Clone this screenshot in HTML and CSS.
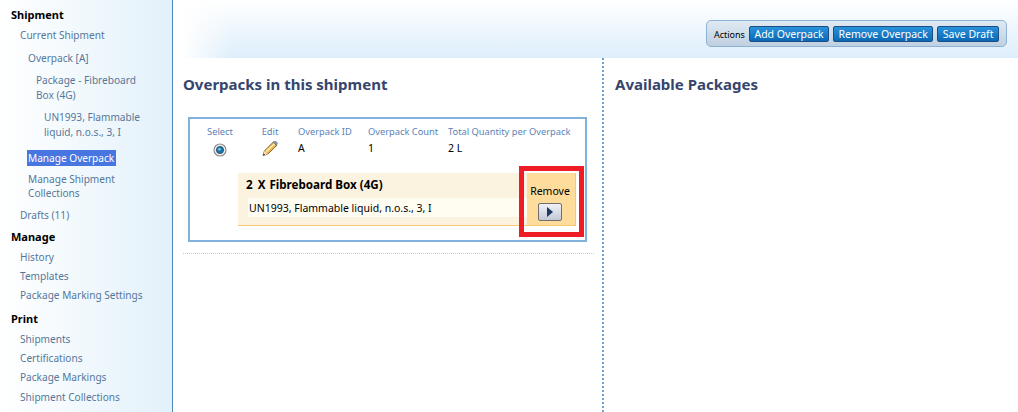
FILE: index.html
```html
<!DOCTYPE html>
<html>

<head>
    <meta charset="UTF-8">
    <title>Manage Overpack</title>
    <link rel="stylesheet" href="styles.css">
</head>

<body>
    <div class="sidebar">
        <h3 class="nav-head">Shipment</h3>
        <a class="nav-link lvl1">Current Shipment</a>
        <a class="nav-link lvl2">Overpack [A]</a>
        <a class="nav-link lvl3">Package - Fibreboard Box (4G)</a>
        <a class="nav-link lvl4">UN1993, Flammable liquid, n.o.s., 3, I</a>
        <a class="nav-link lvl2 current"><span>Manage Overpack</span></a>
        <a class="nav-link lvl2 collections">Manage Shipment Collections</a>
        <a class="nav-link lvl1 drafts">Drafts (11)</a>
        <h3 class="nav-head">Manage</h3>
        <a class="nav-link lvl1">History</a>
        <a class="nav-link lvl1">Templates</a>
        <a class="nav-link lvl1">Package Marking Settings</a>
        <h3 class="nav-head print">Print</h3>
        <a class="nav-link lvl1">Shipments</a>
        <a class="nav-link lvl1">Certifications</a>
        <a class="nav-link lvl1">Package Markings</a>
        <a class="nav-link lvl1 last">Shipment Collections</a>
    </div>

    <div class="main">
        <div class="topbar">
            <div class="actions">
                <span class="actions-label">Actions</span>
                <button class="btn">Add Overpack</button>
                <button class="btn">Remove Overpack</button>
                <button class="btn">Save Draft</button>
            </div>
        </div>

        <div class="columns">
            <div class="col-left">
                <h2>Overpacks in this shipment</h2>
                <div class="overpack-wrap">
                    <div class="overpack">
                        <div class="overpack-row">
                            <div class="cell cell-select">
                                <div class="cell-label">Select</div>
                                <svg class="radio" width="14" height="14" viewBox="0 0 14 14">
                                    <circle cx="7" cy="7" r="6" fill="#f0f0f0" stroke="#8f8f8f" stroke-width="1.2" />
                                    <circle cx="7" cy="7" r="3.6" fill="#1b76a8" stroke="#24455f" stroke-width="0.8" />
                                    <circle cx="6.4" cy="6.2" r="1.3" fill="#7fd0ee" />
                                </svg>
                            </div>
                            <div class="cell cell-edit">
                                <div class="cell-label">Edit</div>
                                <svg class="pencil" width="16" height="15" viewBox="0 0 16 15">
                                    <path d="M1 14.5l1.4-4.6L11.4 1l3.6 3.2-9.2 8.9z" fill="#eeb648" stroke="#7d5a2a" stroke-width="0.9" />
                                    <path d="M3.6 9.8L12 2.2l1.2 1.1-8.2 8z" fill="#fbe7a8" />
                                    <path d="M11.4 1l1-.6c.5-.3 1-.2 1.4.1l1.2 1.1c.4.4.4 1 .1 1.4l-.6 1.2-1.5-1.4z" fill="#8c9fc0" stroke="#4a5d7e" stroke-width="0.6" />
                                    <path d="M1 14.5l1.4-4.6 3.4 3.2z" fill="#f5e2bd" />
                                    <path d="M1 14.5l.6-2 1.6 1.3z" fill="#2a2a3a" />
                                </svg>
                            </div>
                            <div class="cell cell-id">
                                <div class="cell-label">Overpack ID</div>
                                <div class="cell-value">A</div>
                            </div>
                            <div class="cell cell-count">
                                <div class="cell-label">Overpack Count</div>
                                <div class="cell-value">1</div>
                            </div>
                            <div class="cell">
                                <div class="cell-label">Total Quantity per Overpack</div>
                                <div class="cell-value">2 L</div>
                            </div>
                        </div>
                        <div class="package">
                            <div class="package-info">
                                <div class="package-title">2<span class="times">X</span>Fibreboard Box (4G)</div>
                                <div class="package-line">UN1993, Flammable liquid, n.o.s., 3, I</div>
                            </div>
                            <div class="package-remove">
                                <div>Remove</div>
                                <button class="play-btn">
                                    <svg width="8" height="10" viewBox="0 0 8 10">
                                        <path d="M1 0l6 5-6 5z" fill="#1c3a60" />
                                    </svg>
                                </button>
                            </div>
                        </div>
                    </div>
                    <div class="highlight"></div>
                </div>
                <div class="divider"></div>
            </div>
            <div class="col-right">
                <h2>Available Packages</h2>
            </div>
        </div>
    </div>
</body>

</html>
```

FILE: styles.css
```css
html {
    height: 100%;
}

body {
    height: 100%;
    margin: 0;
    overflow: hidden;
    display: flex;
    font: 10.5px/14px "Noto Sans", "DejaVu Sans", sans-serif;
    color: #000;
    background-color: #fff;
}

/* left nav */
.sidebar {
    width: 172px;
    flex-shrink: 0;
    padding-top: 8px;
    border-right: 1px solid #4a8abd;
    background: linear-gradient(to right, #ffffff, #e2f1fa);
    font-size: 10.1px;
}

.nav-head {
    margin: 8px 0 6px;
    padding-left: 11px;
    font-size: 11px;
    line-height: 14px;
    font-weight: bold;
    color: #000;
}

.nav-head:first-child {
    margin-top: 0;
}

.nav-head.print {
    margin-top: 10px;
}

.nav-link {
    display: block;
    color: #56779a;
    margin-bottom: 5px;
}

.lvl1 {
    padding-left: 20px;
}

.lvl2 {
    padding: 0 20px 0 28px;
    margin-top: 9px;
    margin-bottom: 8px;
}

.lvl3 {
    padding: 0 20px 0 36px;
    line-height: 15px;
    margin-bottom: 7px;
}

.lvl4 {
    padding: 0 20px 0 44px;
    line-height: 15px;
    margin-bottom: 10px;
}

.current {
    margin-top: 0;
    margin-bottom: 6px;
}

.current span {
    display: inline-block;
    margin-left: -1px;
    padding: 0 2px 0 1px;
    line-height: 16px;
    color: #fff;
    background-color: #4876e0;
}

.collections {
    margin-top: 0;
    margin-bottom: 8px;
}

.drafts {
    margin-bottom: 0;
}

.last {
    margin-top: 6px;
}

/* main */
.main {
    flex: 1;
    display: flex;
    flex-direction: column;
    min-width: 0;
}

.topbar {
    height: 58px;
    flex-shrink: 0;
    display: flex;
    justify-content: flex-end;
    align-items: flex-start;
    box-sizing: border-box;
    padding: 20px 11px 0 0;
    background:
        linear-gradient(to right, #ffffff 8px, rgba(255, 255, 255, 0) 60px),
        linear-gradient(to bottom, #ffffff, #ddeefb);
}

.actions {
    display: flex;
    align-items: center;
    gap: 4px;
    height: 25px;
    padding: 0 7px;
    border: 1px solid #8cb2d6;
    border-radius: 5px;
    background: linear-gradient(to bottom, #dfe9f3, #bfd0e0);
}

.actions-label {
    font-size: 9px;
    margin-top: 2px;
}

.btn {
    height: 16px;
    padding: 0 4.5px;
    font: 10.5px/14px "Noto Sans", "DejaVu Sans", sans-serif;
    color: #fff;
    border: 1px solid #1a4f86;
    border-radius: 2px;
    background: linear-gradient(to bottom, #2a92dc, #0a68b4);
}

.columns {
    flex: 1;
    display: flex;
}

.col-left {
    width: 431px;
    box-sizing: border-box;
    padding: 0 8px 0 10px;
    border-right: 2px dotted #6ea3d4;
}

.col-right {
    flex: 1;
    padding-left: 11px;
}

h2 {
    margin: 16px 0 0;
    font-size: 15px;
    line-height: 20px;
    font-weight: bold;
    color: #35456e;
}

.overpack-wrap {
    position: relative;
    margin: 23px 7px 0 5px;
}

.overpack {
    height: 125px;
    box-sizing: border-box;
    border: 2px solid #7fb2dc;
    padding: 6px 0 0;
}

.overpack-row {
    display: flex;
    height: 48px;
}

.cell-label {
    font-size: 9.3px;
    line-height: 14px;
    color: #5a82b8;
    white-space: nowrap;
}

.cell-value {
    margin-top: 2px;
    line-height: 14px;
}

.cell-select {
    width: 60px;
    text-align: center;
}

.cell-edit {
    width: 40px;
    margin-right: 8px;
    text-align: center;
}

.cell-id {
    width: 70px;
}

.cell-count {
    width: 80px;
}

.radio {
    display: block;
    margin: 4px auto 0;
}

.pencil {
    display: block;
    margin: 2px auto 0;
}

.package {
    display: flex;
    height: 52px;
    margin: 0 9px 0 48px;
    border-bottom: 1px solid #f5c96f;
    background-color: #fbf3df;
}

.package-info {
    flex: 1;
    padding: 3px 0 0 8px;
}

.package-title {
    font-size: 11.6px;
    font-weight: bold;
    line-height: 18px;
}

.times {
    margin: 0 4px 0 5px;
}

.package-line {
    height: 19px;
    margin: 4px 0 0 2px;
    padding-left: 1px;
    line-height: 20px;
    background-color: #fffdf2;
}

.package-remove {
    width: 49px;
    flex-shrink: 0;
    box-sizing: border-box;
    padding: 11px 2px 0 0;
    text-align: center;
    border-right: 1px solid #f5c96f;
    background-color: #fddc9c;
}

.play-btn {
    display: flex;
    align-items: center;
    justify-content: center;
    width: 24px;
    height: 18px;
    margin: 5px auto 0;
    padding: 0;
    border: 1px solid #6f6f6f;
    border-radius: 2px;
    background: linear-gradient(to bottom, #f0f2f6, #c3c9d6);
}

/* annotation drawn on top of the screenshot */
.highlight {
    position: absolute;
    left: 331px;
    top: 49px;
    width: 55px;
    height: 61px;
    border: 5px solid #ee1c25;
}

.divider {
    margin-top: 11px;
    border-top: 1px dotted #c8c8c8;
}
```
